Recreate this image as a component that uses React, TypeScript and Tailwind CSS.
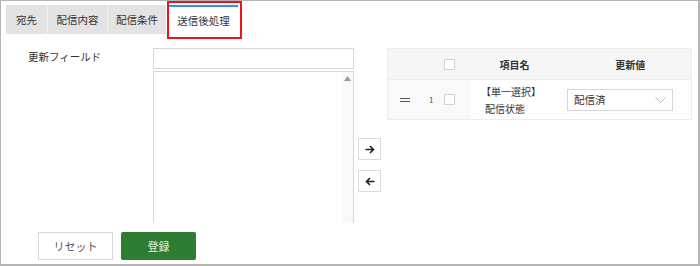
import React from "react";

const font = { fontFamily: '"Noto Sans CJK JP", "Noto Sans", sans-serif' };

function Checkbox() {
  return <div className="w-[11px] h-[11px] border border-[#cfcfcf] bg-white rounded-[1px]" />;
}

export default function App() {
  return (
    <div
      className="relative w-[700px] h-[266px] bg-white border-l border-t border-r-2 border-b-2 border-[#b4b4b4] overflow-hidden text-[#333]"
      style={font}
    >
      {/* tabs */}
      <div className="flex mt-[4px] ml-[5px] h-[29px] text-[10.5px]">
        <div className="w-[41px] bg-[#e3e3e3] flex items-center justify-center">宛先</div>
        <div className="w-px bg-[#f0f0f0]" />
        <div className="w-[59px] bg-[#e3e3e3] flex items-center justify-center">配信内容</div>
        <div className="w-px bg-[#f0f0f0]" />
        <div className="w-[58px] bg-[#e3e3e3] flex items-center justify-center">配信条件</div>
        <div className="w-[3px]" />
        <div className="w-[69px] bg-white border-t-2 border-[#3b8fd9] flex items-center justify-center">送信後処理</div>
      </div>
      <div className="absolute left-[166px] top-0 w-[75px] h-[38px] border-2 border-[#e8141b] pointer-events-none" />

      {/* content */}
      <div className="flex mt-[14px] h-[175px]">
        <div className="w-[152px] pl-[27px] pt-[1px] text-[10.5px]">更新フィールド</div>
        <div className="w-[201px] flex flex-col gap-[2px]">
          <div className="h-[21px] border border-[#d8d8d8] bg-white" />
          <div className="flex-1 border-l border-r border-t border-[#d8d8d8] bg-white flex justify-end">
            <div className="w-[11px] bg-[#fafafa] flex justify-center pt-[4px]">
              <svg width="7" height="5" viewBox="0 0 7 5">
                <path d="M3.5 0 L7 5 L0 5 Z" fill="#9a9a9a" />
              </svg>
            </div>
          </div>
        </div>
        <div className="w-[33px] flex flex-col pl-[4px] pt-[90px] gap-[10px]">
          <div className="w-[23px] h-[22px] border border-[#dcdcdc] bg-white flex items-center justify-center">
            <svg width="10" height="9" viewBox="0 0 10 9">
              <path d="M0.5 4.5 H8.5 M5 1 L8.5 4.5 L5 8" stroke="#222" strokeWidth="1.6" fill="none" />
            </svg>
          </div>
          <div className="w-[23px] h-[22px] border border-[#dcdcdc] bg-white flex items-center justify-center">
            <svg width="10" height="9" viewBox="0 0 10 9">
              <path d="M9.5 4.5 H1.5 M5 1 L1.5 4.5 L5 8" stroke="#222" strokeWidth="1.6" fill="none" />
            </svg>
          </div>
        </div>
        <div className="w-[305px] self-start border border-[#ececec] text-[10px]">
          <div className="flex h-[30px] bg-[#f6f6f6] items-center">
            <div className="w-[52px]" />
            <div className="w-[20px] flex justify-center"><Checkbox /></div>
            <div className="w-[110px] text-center font-bold">項目名</div>
            <div className="w-[122px] text-center font-bold">更新値</div>
          </div>
          <div className="flex h-[40px] border-t border-[#ececec]">
            <div className="w-[83px] bg-[#f9f9f9] flex items-center">
              <div className="ml-[12px] w-[10px] h-[4px] border-t-[1.5px] border-b-[1.5px] border-[#555]" />
              <div className="ml-[19px] text-[8px] text-[#555]">1</div>
              <div className="ml-[11px]"><Checkbox /></div>
            </div>
            <div className="w-[80px] flex flex-col justify-center leading-[17px] pl-[10px]">
              <div>【単一選択】</div>
              <div className="pl-[4px]">配信状態</div>
            </div>
            <div className="flex-1 flex items-center pl-[16px]">
              <div className="w-[106px] h-[22px] border border-[#d6d6d6] bg-white flex items-center justify-between px-[6px] text-[10.5px]">
                <span>配信済</span>
                <svg width="11" height="6" viewBox="0 0 11 6">
                  <path d="M0.5 0.5 L5.5 5.5 L10.5 0.5" stroke="#bbb" strokeWidth="1" fill="none" />
                </svg>
              </div>
            </div>
          </div>
        </div>
      </div>

      {/* buttons */}
      <div className="flex gap-[8px] ml-[37px] mt-[9px] text-[11px]">
        <div className="w-[75px] h-[28px] border border-[#d8d8d8] bg-white flex items-center justify-center text-[#555]">リセット</div>
        <div className="w-[75px] h-[28px] rounded-[2px] bg-[#2e7d32] flex items-center justify-center text-[#e6f2e6]">登録</div>
      </div>
    </div>
  );
}
